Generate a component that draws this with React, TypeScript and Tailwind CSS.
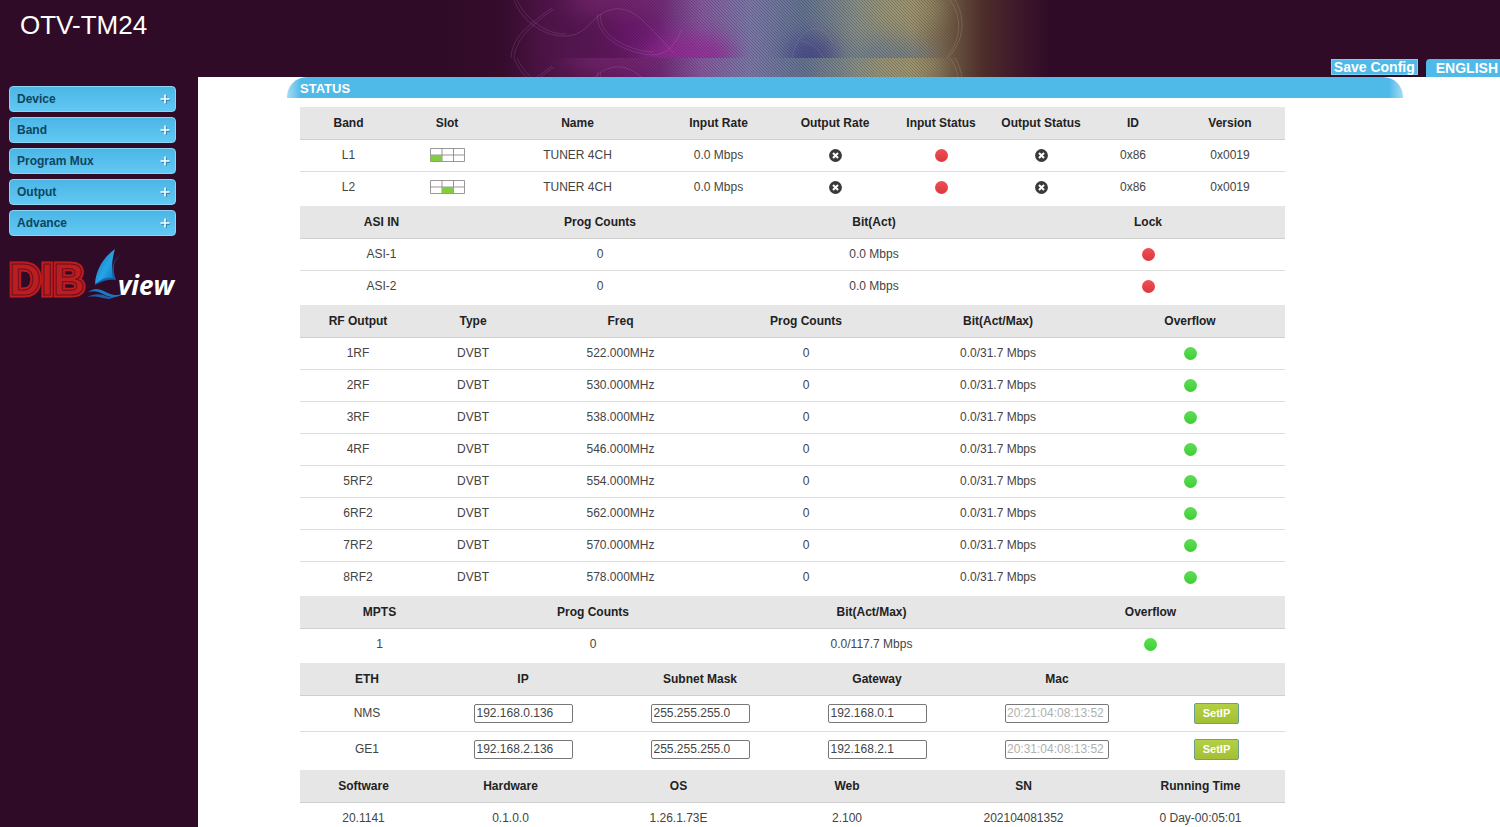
import type { ReactNode } from 'react';

const menu = ['Device', 'Band', 'Program Mux', 'Output', 'Advance'];

const bands = [
  { band: 'L1', slot: 0 },
  { band: 'L2', slot: 1 },
];

const rfOutputs = [
  { name: '1RF', freq: '522.000MHz' },
  { name: '2RF', freq: '530.000MHz' },
  { name: '3RF', freq: '538.000MHz' },
  { name: '4RF', freq: '546.000MHz' },
  { name: '5RF2', freq: '554.000MHz' },
  { name: '6RF2', freq: '562.000MHz' },
  { name: '7RF2', freq: '570.000MHz' },
  { name: '8RF2', freq: '578.000MHz' },
];

const ports = [
  { name: 'NMS', ip: '192.168.0.136', mask: '255.255.255.0', gateway: '192.168.0.1', mac: '20:21:04:08:13:52' },
  { name: 'GE1', ip: '192.168.2.136', mask: '255.255.255.0', gateway: '192.168.2.1', mac: '20:31:04:08:13:52' },
];

function Led({ on = false }: { on?: boolean }) {
  return (
    <span
      role="img"
      aria-label={on ? 'ok' : 'alarm'}
      className={
        on
          ? 'mx-auto block size-[13px] rounded-full bg-linear-to-b from-[#5be04f] to-[#3fce38]'
          : 'mx-auto block size-[13px] rounded-full bg-linear-to-b from-[#f04e52] to-[#d93a3e]'
      }
    />
  );
}

function NoSignal() {
  return (
    <svg className="mx-auto block" width="13" height="13" viewBox="0 0 13 13" role="img" aria-label="no signal">
      <circle cx="6.5" cy="6.5" r="6.4" fill="#3a3a3a" />
      <path d="M4 4l5 5M9 4l-5 5" stroke="#fff" strokeWidth="2" />
    </svg>
  );
}

function Slot({ active }: { active: number }) {
  return (
    <svg className="mx-auto block" width="35" height="14" viewBox="0 0 35 14" role="img" aria-label={`slot ${active + 1}`}>
      <path d="M0.5 0.5h34v13h-34zM0.5 7h34M12 0.5v13M23.5 0.5v13" fill="none" stroke="#777" strokeOpacity="0.75" />
      <rect x={active * 11.5 + 0.5} y="7" width="11.5" height="6" fill="#84cb42" />
    </svg>
  );
}

type GridProps = { cols: string[]; heads: string[]; tall?: boolean; rows: ReactNode[][] };

function Grid({ cols, heads, rows, tall = false }: GridProps) {
  return (
    <table className="mb-[3px] w-full table-fixed border-collapse text-center text-xs">
      <colgroup>
        {cols.map((col, i) => (
          <col key={i} className={col} />
        ))}
      </colgroup>
      <thead>
        <tr className="h-8 border-b border-[#cfcfcf] bg-[#e6e6e6] text-[#222]">
          {heads.map((head, i) => (
            <th key={i} className="p-0 font-bold">{head}</th>
          ))}
        </tr>
      </thead>
      <tbody>
        {rows.map((row, i) => (
          <tr key={i} className={tall ? 'h-9 border-b border-[#ddd] last:border-b-0' : 'h-8 border-b border-[#ddd] last:border-b-0'}>
            {row.map((cell, j) => (
              <td key={j} className="p-0">{cell}</td>
            ))}
          </tr>
        ))}
      </tbody>
    </table>
  );
}

function Field({ label, value, disabled = false }: { label: string; value: string; disabled?: boolean }) {
  return (
    <input
      type="text"
      aria-label={label}
      defaultValue={value}
      disabled={disabled}
      className={
        disabled
          ? 'mx-auto block h-[19px] w-[104px] rounded-xs border border-[#777] bg-white px-px text-xs text-[#b0b0b0]'
          : 'mx-auto block h-[19px] w-[99px] rounded-xs border border-[#777] bg-white px-0.5 text-xs text-[#444]'
      }
    />
  );
}

function SetIp() {
  return (
    <button type="button" className="mx-auto block h-[21px] w-[45px] rounded-xs border border-[#6aa08c] bg-linear-to-b from-[#b3cf45] to-[#a3bf33] text-[11px] leading-4 font-bold text-white">
      SetIP
    </button>
  );
}

function Tile() {
  return (
    <g>
      <rect width="600" height="58" fill="url(#sweep)" />
      <g filter="url(#soft)">
        <ellipse cx="165" cy="0" rx="50" ry="12" fill="#7d2a76" opacity="0.8" />
        <ellipse cx="188" cy="36" rx="26" ry="20" fill="#6f1470" opacity="0.7" />
        <ellipse cx="240" cy="56" rx="46" ry="22" fill="#98289a" opacity="0.8" />
        <ellipse cx="362" cy="56" rx="26" ry="20" fill="#42428a" opacity="0.8" />
        <ellipse cx="440" cy="60" rx="44" ry="20" fill="#5f7494" opacity="0.6" />
        <ellipse cx="455" cy="8" rx="40" ry="18" fill="#a39c70" opacity="0.5" />
      </g>
      <rect width="600" height="58" fill="url(#weave)" mask="url(#fade)" />
      <g fill="none" stroke="#c58ac8" strokeOpacity="0.22" strokeWidth="0.9">
        <path d="M64 0C72 22 96 38 118 36S142 12 164 9s36 20 60 44" />
        <path d="M67 0C76 20 98 35 116 34" />
        <path d="M61 58C62 36 80 24 102 8" />
        <path d="M64 58C66 38 82 25 104 9" />
        <path d="M148 14c-4 18 20 38 54 41 16 0 24-12 30-26" />
        <path d="M151 14c-4 18 22 36 52 38" />
        <path d="M342 58c4-22 18-34 30-28 6 4 9 8 11 14M352 41c10 2 18 10 22 17" />
      </g>
      <g fill="none" stroke="#c0a88c" strokeOpacity="0.28" strokeWidth="0.9">
        <path d="M500 0c14 20 10 42-4 58" />
        <path d="M505 0c12 20 8 42-7 58" />
      </g>
    </g>
  );
}

function HeaderArt() {
  return (
    <svg className="absolute top-0 left-1/2 -translate-x-1/2" width="600" height="77" viewBox="0 0 600 77" aria-hidden="true">
      <defs>
        <linearGradient id="sweep">
          <stop offset="0" stopColor="#300b27" />
          <stop offset="0.09" stopColor="#360c2d" />
          <stop offset="0.16" stopColor="#4d1447" />
          <stop offset="0.28" stopColor="#5f185c" />
          <stop offset="0.35" stopColor="#702c78" />
          <stop offset="0.42" stopColor="#845a9c" />
          <stop offset="0.5" stopColor="#7a78a6" />
          <stop offset="0.59" stopColor="#637390" />
          <stop offset="0.68" stopColor="#868e86" />
          <stop offset="0.77" stopColor="#988f6c" />
          <stop offset="0.84" stopColor="#6a5440" />
          <stop offset="0.89" stopColor="#4d2c2a" />
          <stop offset="0.95" stopColor="#3d172a" />
          <stop offset="1" stopColor="#300b27" />
        </linearGradient>
        <linearGradient id="edge">
          <stop offset="0.1" stopColor="#000" />
          <stop offset="0.3" stopColor="#fff" />
          <stop offset="0.78" stopColor="#fff" />
          <stop offset="0.9" stopColor="#000" />
        </linearGradient>
        <mask id="fade">
          <rect width="600" height="58" fill="url(#edge)" />
        </mask>
        <pattern id="weave" width="3" height="3" patternUnits="userSpaceOnUse">
          <path d="M0 0l3 3" stroke="#1c1026" strokeOpacity="0.22" />
        </pattern>
        <filter id="soft" filterUnits="userSpaceOnUse" x="-50" y="-60" width="700" height="180" colorInterpolationFilters="sRGB">
          <feGaussianBlur stdDeviation="11" />
        </filter>
        <clipPath id="tile">
          <rect width="600" height="58" />
        </clipPath>
      </defs>
      <g clipPath="url(#tile)">
        <Tile />
      </g>
      <g transform="translate(0 58)">
        <g clipPath="url(#tile)">
          <Tile />
        </g>
      </g>
    </svg>
  );
}

function Logo() {
  return (
    <svg className="mt-3 block" width="172" height="64" viewBox="0 0 172 64" role="img" aria-label="DIBview">
      <defs>
        <linearGradient id="sail" x1="0" y1="0" x2="1" y2="1">
          <stop offset="0" stopColor="#1668b4" />
          <stop offset="0.55" stopColor="#25a5e6" />
          <stop offset="1" stopColor="#1269b2" />
        </linearGradient>
      </defs>
      <g fontFamily="Liberation Sans, sans-serif" fontWeight="700" fontSize="44">
        <text x="0" y="47" fill="#bd1c20" stroke="#bd1c20" strokeWidth="5">DIB</text>
        <text x="0" y="47" fill="none" stroke="#6a111b" strokeWidth="1">DIB</text>
      </g>
      <path d="M106 1C96 8 87 20 86 36c6-4 13-6 19-6-3-9-2-19 1-29z" fill="url(#sail)" />
      <path d="M112 6c-8 7-9 15-5 26-9-1-16 2-22 6 6-7 12-9 19-8-2-9 0-18 8-24z" fill="#1560a8" />
      <path d="M79 44c8-6 14-2 20 1s10 2 15 1c-6 4-12 4-18 1s-10-5-17-3z" fill="#1c78c0" />
      <path d="M78 49c8-4 14-3 19-1s6 1 10 0c-5 4-9 3-13 2s-9-2-16-1z" fill="#1a62aa" />
      <text x="109" y="47" fontFamily="Open Sans, sans-serif" fontStyle="italic" fontWeight="700" fontSize="26" fill="#fff">view</text>
    </svg>
  );
}

export default function App() {
  return (
    <div className="flex min-h-screen flex-col bg-[#300b27] font-['Liberation_Sans',Arial,sans-serif] text-[#444]">
      <header className="relative flex h-[77px] shrink-0 items-start justify-between">
        <HeaderArt />
        <h1 className="relative pt-[9px] pl-5 text-[26px] leading-8 text-white">OTV-TM24</h1>
        <div className="relative flex gap-2 self-end text-sm font-bold text-white">
          <button type="button" className="mb-0.5 h-4 border border-[#7fd0f2] bg-[#4fb9e8] px-0.5 leading-[14px]">Save Config</button>
          <button type="button" className="h-[18px] rounded-tl bg-[#4fb9e8] pr-0.5 pl-2.5 leading-[18px]">ENGLISH</button>
        </div>
      </header>

      <div className="flex flex-1">
        <aside className="w-[198px] shrink-0 pt-[9px] pr-[22px] pl-[9px]">
          <nav className="flex flex-col gap-[5px]">
            {menu.map((item) => (
              <button
                key={item}
                type="button"
                className="flex h-[26px] items-center justify-between rounded border border-[#8ad6f5] bg-linear-to-b from-[#4bb6e6] to-[#62c8f3] pr-[5px] pl-[7px] text-xs font-bold text-[#0d4660]"
              >
                {item}
                <svg width="10" height="10" viewBox="0 0 10 10" aria-hidden="true">
                  <path d="M6 1.5v9M1.5 6h9" stroke="#1f7ba8" strokeWidth="1.4" />
                  <path d="M5 0.5v9M0.5 5h9" stroke="#fff" strokeWidth="1.6" />
                </svg>
              </button>
            ))}
          </nav>
          <Logo />
        </aside>

        <main className="flex-1 bg-white">
          <h2 className="mr-[97px] ml-[89px] h-[21px] rounded-t-[20px] bg-[linear-gradient(to_right,#a6dcf4,#4fb9e8_14px,#4fb9e8_calc(100%-14px),#a6dcf4)] pl-[13px] text-[13px] leading-6 font-bold text-white">
            STATUS
          </h2>
          <div className="mt-[9px] mr-[215px] ml-[102px]">
            <Grid
              cols={['w-[97px]', 'w-[100px]', 'w-[161px]', 'w-[121px]', 'w-[112px]', 'w-[100px]', 'w-[100px]', 'w-[84px]', 'w-[110px]']}
              heads={['Band', 'Slot', 'Name', 'Input Rate', 'Output Rate', 'Input Status', 'Output Status', 'ID', 'Version']}
              rows={bands.map((b) => [b.band, <Slot active={b.slot} />, 'TUNER 4CH', '0.0 Mbps', <NoSignal />, <Led />, <NoSignal />, '0x86', '0x0019'])}
            />
            <Grid
              cols={['w-[163px]', 'w-[274px]', 'w-[274px]', 'w-[274px]']}
              heads={['ASI IN', 'Prog Counts', 'Bit(Act)', 'Lock']}
              rows={['ASI-1', 'ASI-2'].map((name) => [name, '0', '0.0 Mbps', <Led />])}
            />
            <Grid
              cols={['w-[116px]', 'w-[114px]', 'w-[181px]', 'w-[190px]', 'w-[194px]', 'w-[190px]']}
              heads={['RF Output', 'Type', 'Freq', 'Prog Counts', 'Bit(Act/Max)', 'Overflow']}
              rows={rfOutputs.map((rf) => [rf.name, 'DVBT', rf.freq, '0', '0.0/31.7 Mbps', <Led on />])}
            />
            <Grid
              cols={['w-[159px]', 'w-[268px]', 'w-[289px]', 'w-[269px]']}
              heads={['MPTS', 'Prog Counts', 'Bit(Act/Max)', 'Overflow']}
              rows={[['1', '0', '0.0/117.7 Mbps', <Led on />]]}
            />
            <Grid
              tall
              cols={['w-[134px]', 'w-[178px]', 'w-[176px]', 'w-[178px]', 'w-[182px]', 'w-[137px]']}
              heads={['ETH', 'IP', 'Subnet Mask', 'Gateway', 'Mac', '']}
              rows={ports.map((p) => [
                p.name,
                <Field label={`${p.name} IP`} value={p.ip} />,
                <Field label={`${p.name} subnet mask`} value={p.mask} />,
                <Field label={`${p.name} gateway`} value={p.gateway} />,
                <Field label={`${p.name} MAC`} value={p.mac} disabled />,
                <SetIp />,
              ])}
            />
            <Grid
              cols={['w-[127px]', 'w-[167px]', 'w-[169px]', 'w-[168px]', 'w-[185px]', 'w-[169px]']}
              heads={['Software', 'Hardware', 'OS', 'Web', 'SN', 'Running Time']}
              rows={[['20.1141', '0.1.0.0', '1.26.1.73E', '2.100', '202104081352', '0 Day-00:05:01']]}
            />
          </div>
        </main>
      </div>
    </div>
  );
}
